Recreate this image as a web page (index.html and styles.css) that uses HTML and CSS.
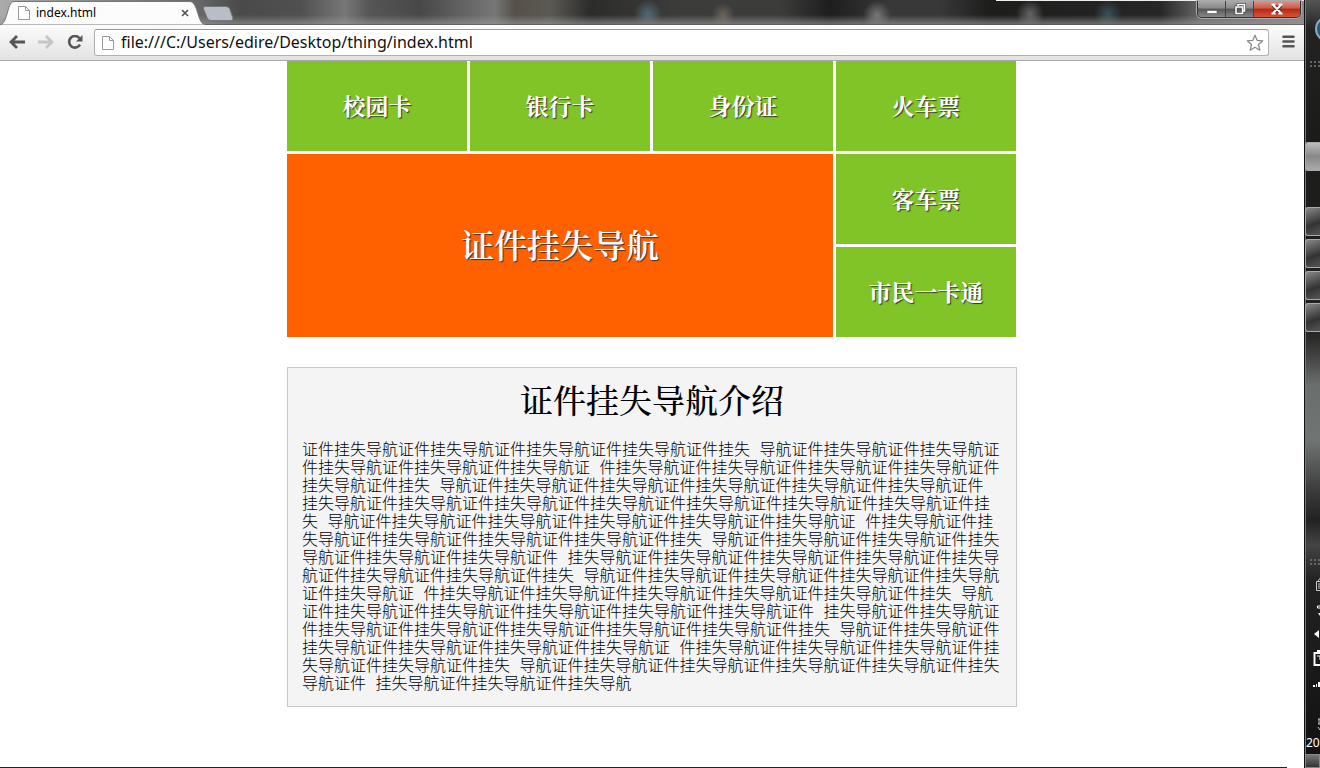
FILE: index.html
```html
<!DOCTYPE html>
<html lang="zh-CN">
<head>
<meta charset="utf-8">
<title>index.html</title>
<link rel="stylesheet" href="styles.css">
</head>
<body>
<div class="desktop">
  <div class="window">
    <header class="titlebar">
      <div class="tab">
        <svg class="tab-shape" viewBox="0 0 206 25" preserveAspectRatio="none" aria-hidden="true"><path d="M0 25C4 24 5 20 7 14C9 7 10 2 14 1.500H190C194 2 196 7 198 14C200 20 201 24 206 25Z" fill="#fcfcfc" stroke="#777" stroke-width="1"/></svg>
        <svg class="page-icon" viewBox="0 0 12 14" aria-hidden="true"><path d="M.5.500h7l4 4v9H.5z" fill="#fff" stroke="#999"/><path d="M7.500.500v4h4" fill="none" stroke="#999"/></svg>
        <span class="tab-title">index.html</span>
        <button class="tab-close" aria-label="Close tab"><svg viewBox="0 0 8 8"><path d="M1 1l6 6M7 1l-6 6" stroke="#555" stroke-width="1.700"/></svg></button>
      </div>
      <button class="new-tab" aria-label="New tab"><svg viewBox="0 0 30 15"><path d="M2 .5h21q3 0 4 3l3 9q0 2-2 2H8q-3 0-4-3L.500 3Q0 .5 2 .5z" fill="#b9bec6" stroke="#71767d"/></svg></button>
      <div class="window-buttons">
        <button class="win" aria-label="Minimize"><svg viewBox="0 0 12 12"><path d="M1 7.500h10v3H1z" fill="#fff" stroke="#555" stroke-width=".6"/></svg></button>
        <button class="win" aria-label="Restore"><svg viewBox="0 0 12 12"><path d="M4 3V1.500h6.500V8H9M2 4h6.500v6.500H2z" fill="none" stroke="#444" stroke-width="2.800"/><path d="M4 3V1.500h6.500V8H9M2 4h6.500v6.500H2z" fill="none" stroke="#fff" stroke-width="1.600"/></svg></button>
        <button class="win win-close" aria-label="Close"><svg viewBox="0 0 12 12"><path d="M2 2l8 8M10 2l-8 8" stroke="#6b2a22" stroke-width="4"/><path d="M2 2l8 8M10 2l-8 8M.5 1.500h4M7.500 1.500h4M.5 10.500h4M7.500 10.500h4" stroke="#fff" stroke-width="2"/></svg></button>
      </div>
    </header>
    <nav class="toolbar">
      <button class="tool" aria-label="Back"><svg viewBox="0 0 16 14"><path d="M8 1L2 7l6 6M2 7h14" fill="none" stroke="#555" stroke-width="2.800"/></svg></button>
      <button class="tool" aria-label="Forward"><svg viewBox="0 0 16 14"><path d="M8 1l6 6-6 6M14 7H0" fill="none" stroke="#c6c6c6" stroke-width="2.800"/></svg></button>
      <button class="tool" aria-label="Reload"><svg viewBox="0 0 16 14"><path d="M12.500 3.200A5.800 5.800 0 1 0 13 9.700" fill="none" stroke="#555" stroke-width="2.600"/><path d="M15.500 0v6.500H9z" fill="#555"/></svg></button>
      <div class="address">
        <svg class="page-icon" viewBox="0 0 12 14" aria-hidden="true"><path d="M.5.500h7l4 4v9H.5z" fill="#fff" stroke="#999"/><path d="M7.500.500v4h4" fill="none" stroke="#999"/></svg>
        <input class="url" type="text" aria-label="Address" value="file:///C:/Users/edire/Desktop/thing/index.html">
        <button class="star" aria-label="Bookmark"><svg viewBox="0 0 18 18"><path d="M9 1.200l2.200 5.200 5.600.4-4.300 3.700 1.400 5.700L9 13.200l-4.900 3 1.400-5.700L1.200 6.800l5.600-.4z" fill="#fff" stroke="#888" stroke-width="1.200" stroke-linejoin="round"/></svg></button>
      </div>
      <button class="menu" aria-label="Menu"><svg viewBox="0 0 13 13"><path d="M1.500 1.700h10M1.500 6.500h10M1.500 11.300h10" stroke="#555" stroke-width="2.600" stroke-linecap="round"/></svg></button>
    </nav>
    <main class="page">
      <div class="tiles">
        <div class="tile">校园卡</div>
        <div class="tile">银行卡</div>
        <div class="tile">身份证</div>
        <div class="tile">火车票</div>
        <div class="tile tile-main">证件挂失导航</div>
        <div class="tile">客车票</div>
        <div class="tile">市民一卡通</div>
      </div>
      <section class="intro">
        <h1 class="intro-title">证件挂失导航介绍</h1>
        <p class="intro-text">证件挂失导航证件挂失导航证件挂失导航证件挂失导航证件挂失 导航证件挂失导航证件挂失导航证件挂失导航证件挂失导航证件挂失导航证 件挂失导航证件挂失导航证件挂失导航证件挂失导航证件挂失导航证件挂失 导航证件挂失导航证件挂失导航证件挂失导航证件挂失导航证件挂失导航证件 挂失导航证件挂失导航证件挂失导航证件挂失导航证件挂失导航证件挂失导航证件挂失导航证件挂失 导航证件挂失导航证件挂失导航证件挂失导航证件挂失导航证件挂失导航证 件挂失导航证件挂失导航证件挂失导航证件挂失导航证件挂失导航证件挂失 导航证件挂失导航证件挂失导航证件挂失导航证件挂失导航证件挂失导航证件 挂失导航证件挂失导航证件挂失导航证件挂失导航证件挂失导航证件挂失导航证件挂失导航证件挂失 导航证件挂失导航证件挂失导航证件挂失导航证件挂失导航证件挂失导航证 件挂失导航证件挂失导航证件挂失导航证件挂失导航证件挂失导航证件挂失 导航证件挂失导航证件挂失导航证件挂失导航证件挂失导航证件挂失导航证件 挂失导航证件挂失导航证件挂失导航证件挂失导航证件挂失导航证件挂失导航证件挂失导航证件挂失 导航证件挂失导航证件挂失导航证件挂失导航证件挂失导航证件挂失导航证 件挂失导航证件挂失导航证件挂失导航证件挂失导航证件挂失导航证件挂失 导航证件挂失导航证件挂失导航证件挂失导航证件挂失导航证件挂失导航证件 挂失导航证件挂失导航证件挂失导航</p>
      </section>
    </main>
  </div>
  <aside class="taskbar">
    <div class="orb"></div>
    <div class="grip"></div>
    <div class="tasks">
      <div class="task task-active"></div>
      <div class="task"></div>
      <div class="task"></div>
      <div class="task"></div>
      <div class="task"></div>
    </div>
    <div class="tray">
      <div class="grip"></div>
      <svg class="tray-icons" viewBox="0 0 15 130" aria-hidden="true">
        <path d="M11.500 14.500h6v9h-6zM13 14l3-4M13 17h3M13 19h3M13 21h3" fill="none" stroke="#ccc"/>
        <path d="M12.500 39h4v-4h3M12.500 39v2h5" fill="none" stroke="#fff"/><path d="M13 46h5l-3 3z" fill="#fff"/>
        <path d="M14 63v8l-5-4z" fill="#fff"/>
        <path d="M9.500 86h8v12h-8zM12 84h3" fill="none" stroke="#fff" stroke-width="2"/><path d="M12 89h3v4" fill="none" stroke="#fff"/>
        <path d="M8 118h2v2H8zM11 117h1v3h-1zM13 115h2v5h-2z" fill="#fff"/>
      </svg>
      <svg class="input-icon" viewBox="0 0 15 16" aria-hidden="true"><path d="M13 2h2M14 2v5M13 7h2M13 10l2 3" fill="none" stroke="#ccc"/></svg>
      <div class="clock">20</div>
      <div class="show-desktop"></div>
    </div>
  </aside>
</div>
</body>
</html>
```
FILE: styles.css
```css
* { box-sizing: border-box; }
body { margin: 0; background: #fff; color: #000; font-family: "Noto Sans", "Noto Sans CJK SC", sans-serif; }
button { display: flex; align-items: center; justify-content: center; padding: 0; border: 0; background: none; }
svg { display: block; }

.desktop { display: flex; min-height: 100vh; }
.window { flex: 1; min-width: 0; background: linear-gradient(90deg, #222 calc(100% - 17px), transparent 0) bottom / 100% 1px no-repeat; }

.titlebar {
  display: flex; align-items: flex-start; height: 25px;
  background:
    linear-gradient(90deg, transparent 996px, #eee 0) top / 100% 1px no-repeat,
    linear-gradient(rgba(255,255,255,0) 60%, rgba(150,150,150,.6) 94%, #555),
    radial-gradient(circle at 648px 14px, #4f6a75, transparent 14px),
    radial-gradient(circle at 723px 15px, #6a6355, transparent 12px),
    radial-gradient(circle at 877px 15px, #777, transparent 14px),
    radial-gradient(circle at 1030px 14px, #666, transparent 14px),
    radial-gradient(circle at 1108px 14px, #38505a, transparent 14px),
    linear-gradient(90deg, #aaa 0, #666 200px, #4a4a4a 240px, #505050 300px, #777 345px, #555 370px, #484848 420px, #777 495px, #555049 515px, #5c5a54 550px, #2c2c2b 590px, #3c3c3b 680px, #3c3c3b 780px, #1e1e1e 830px, #383838 890px, #383838 940px, #1d1d1c 990px, #262626 1160px, #666 1200px, #888 1300px);
}
.tab { position: relative; display: flex; align-items: center; width: 206px; height: 25px; padding: 1px 17px 0 18px; }
.tab-shape { position: absolute; inset: 0; width: 100%; height: 100%; }
.page-icon { position: relative; width: 12px; height: 14px; flex: none; }
.tab-title { position: relative; flex: 1; padding-left: 6px; font-size: 12px; line-height: 16px; }
.tab-close { position: relative; width: 9px; height: 9px; }
.tab-close svg { width: 8px; }
.new-tab { width: 30px; height: 15px; margin: 6px 0 0 -3px; }
.new-tab svg { width: 30px; }
.window-buttons { display: flex; margin: 1px 3px 0 auto; border: 1px solid #333; border-top: 0; border-radius: 0 0 5px 5px; overflow: hidden; box-shadow: 0 0 0 1px #aaa; }
.win { width: 28px; height: 16px; border-right: 1px solid #444; background: linear-gradient(#aaa, #888 45%, #555 50%, #888); }
.win svg { width: 12px; }
.win-close { width: 46px; border-right: 0; background: linear-gradient(#dc9588, #cb5a48 45%, #b52810 50%, #d4553a); }

.toolbar { display: flex; align-items: center; height: 36px; padding: 0 9px 2px 9px; border-bottom: 1px solid #aaa; background: linear-gradient(#fcfcfc, #e2e2e2); }
.tool { width: 16px; height: 16px; margin-right: 13px; }
.tool svg { width: 16px; }
.address { display: flex; flex: 1; align-items: center; height: 27px; margin: 2px 12px 0 -2px; padding: 0 4px 0 7px; border: 1px solid #b0b0b0; border-top-color: #999; border-radius: 3px; background: #fff; }
.url { flex: 1; min-width: 0; padding: 0 0 2px 7px; border: 0; background: none; font: 16px/22px "Noto Sans", sans-serif; color: #111; }
.star { width: 18px; height: 18px; }
.star svg { width: 18px; }
.menu { width: 14px; height: 14px; }
.menu svg { width: 13px; }

.page { max-width: 730px; margin: 0 auto; }
.tiles { display: grid; grid-template-columns: repeat(4, 1fr); grid-auto-rows: 90px; gap: 3px; margin-right: 1px; }
.tile { display: flex; align-items: center; justify-content: center; background: #80c427; color: #fff; font: bold 23px/30px "Noto Serif CJK SC", "Noto Sans CJK SC", sans-serif; text-shadow: 1px 1px 1px #333; }
.tile-main { grid-column: span 3; grid-row: span 2; padding-bottom: 4px; background: #ff6000; font-size: 33px; font-weight: 600; line-height: 40px; }
.intro { margin-top: 30px; padding: 14px 14px 12px; border: 1px solid #c8c8c8; background: #f4f4f4; }
.intro-title { margin: 0 0 26px; text-align: center; font: 500 33px/34px "Noto Serif CJK SC", "Noto Sans CJK SC", sans-serif; }
.intro-text { margin: 0; font: 300 16px/18px "Liberation Mono", "Noto Sans CJK SC", monospace; }

.taskbar {
  display: flex; flex-direction: column; width: 16px; overflow: hidden; border-left: 1px solid #111; box-shadow: inset 1px 0 #777;
  background: linear-gradient(#555 0, #222 30px, #1b1b19 140px, #222 330px, #3a3a39 350px, #6a6f6e 385px, #707574 440px, #3c3c3b 490px, #222 520px, #444 545px, #222 580px, #111 768px);
}
.orb { width: 26px; height: 26px; margin: 16px 0 18px 10px; border: 2px solid #8ab; border-radius: 50%; background: #1d5b86; flex: none; }
.grip { height: 9px; margin-left: 4px; flex: none; background: radial-gradient(circle, #666 1px, transparent 1px) 0 0 / 4px 4px; }
.tasks { display: flex; flex-direction: column; gap: 3px; margin-top: 73px; }
.task { height: 29px; border: 1px solid #aaa; border-right: 0; border-radius: 3px 0 0 3px; background: linear-gradient(160deg, #888, #333 60%, #555); }
.task-active { margin-bottom: 33px; background: linear-gradient(#bbb, #888 50%, #aaa); }
.tray { display: flex; flex-direction: column; margin-top: auto; }
.tray-icons { width: 15px; height: 130px; margin-bottom: 20px; }
.input-icon { width: 15px; height: 16px; margin-bottom: 2px; }
.clock { padding-left: 1px; color: #fff; font-size: 12px; line-height: 16px; }
.show-desktop { height: 14px; margin-top: 3px; border: 1px solid #888; background: linear-gradient(#777, #333); }
```
